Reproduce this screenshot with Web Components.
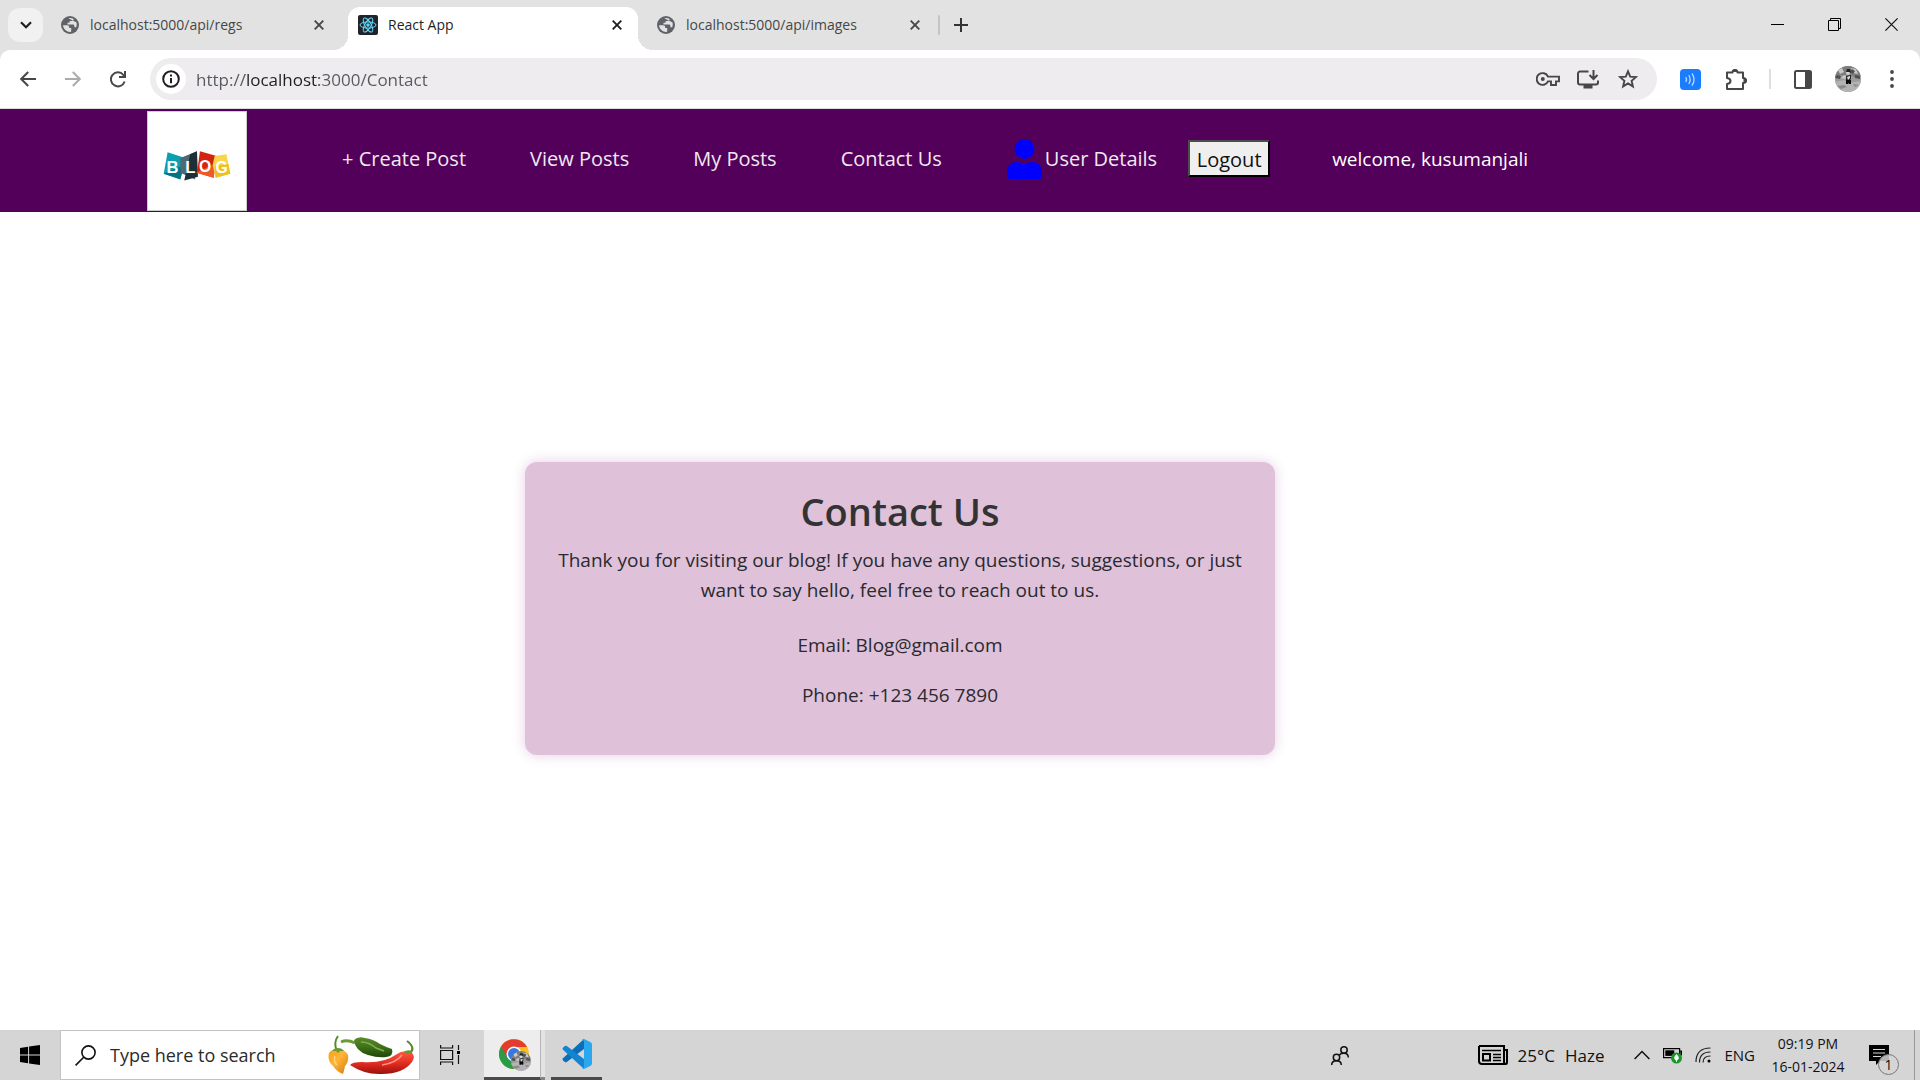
<!DOCTYPE html>
<html lang="en">
<head>
<meta charset="utf-8">
<title>React App</title>
<style>
  html, body { margin: 0; height: 100%; }
  body { font-family: "Open Sans", "Noto Sans", sans-serif; background: #fff; color: #212529; }
</style>
</head>
<body>
<desktop-screen>
  <tab-strip slot="tabs">
    <browser-tab icon="globe" label="localhost:5000/api/regs"></browser-tab>
    <browser-tab icon="react" label="React App" active></browser-tab>
    <browser-tab icon="globe" label="localhost:5000/api/images"></browser-tab>
  </tab-strip>
  <browser-toolbar slot="toolbar"></browser-toolbar>
  <blog-navbar slot="nav">
    <nav-link href="#create">+ Create Post</nav-link>
    <nav-link href="#view">View Posts</nav-link>
    <nav-link href="#mine">My Posts</nav-link>
    <nav-link href="#contact">Contact Us</nav-link>
    <nav-link href="#user" user>User Details</nav-link>
  </blog-navbar>
  <contact-card>
    <span slot="title">Contact Us</span>
    <span slot="intro">Thank you for visiting our blog! If you have any questions, suggestions, or just want to say hello, feel free to reach out to us.</span>
    <span slot="email">Email: Blog@gmail.com</span>
    <span slot="phone">Phone: +123 456 7890</span>
  </contact-card>
  <task-bar slot="taskbar"></task-bar>
</desktop-screen>

<script>
const RESET = `
  :host, *, *::before, *::after { box-sizing: border-box; }
  button { border: 0; padding: 0; margin: 0; background: none; font: inherit; color: inherit; display: grid; place-items: center; flex: none; }
  input { font: inherit; border: 0; outline: 0; padding: 0; background: none; min-width: 0; }
  svg { display: block; flex: none; }
`;
function define(name, html) {
  const template = document.createElement('template');
  customElements.define(name, class extends HTMLElement {
    connectedCallback() {
      if (this.shadowRoot) return;
      template.innerHTML = typeof html === 'function' ? html(this) : html;
      this.attachShadow({ mode: 'open' }).appendChild(template.content.cloneNode(true));
    }
  });
}

const globe = `<svg width="18" height="18" viewBox="0 0 18 18"><circle cx="9" cy="9" r="9" fill="#5f6368"/><path d="M2 9.2h4.2c1.300 0 2 .8 2 1.900v.9h2v3.800A7 7 0 0 1 2 9.200zM7.400 2.200c2-.5 3.800-.1 5.300.9-.2 1.400-1 2-2.300 2H8.600v1.700H6.500v1.700h5.400c1 0 1.500.6 1.500 1.500v1.200h1.800c.5-1.400.8-3 .3-4.600" fill="#e2e2e2"/></svg>`;
const react = `<svg width="20" height="20" viewBox="0 0 20 20"><rect width="20" height="20" rx="2" fill="#20232a"/><g fill="none" stroke="#61dafb" stroke-width="1"><ellipse cx="10" cy="10" rx="8" ry="3.100"/><ellipse cx="10" cy="10" rx="8" ry="3.100" transform="rotate(60 10 10)"/><ellipse cx="10" cy="10" rx="8" ry="3.100" transform="rotate(120 10 10)"/></g><circle cx="10" cy="10" r="1.700" fill="#61dafb"/></svg>`;
const avatar = size => `<svg width="${size}" height="${size}" viewBox="0 0 26 26"><clipPath id="a"><circle cx="13" cy="13" r="13"/></clipPath><g clip-path="url(#a)"><rect width="26" height="26" fill="#9c9c9c"/><path d="M0 0h26v10l-5 2-4-2-5 1-6-2-6 3z" fill="#7d7d7d"/><path d="M3 4l4-2 2 4-4 2zM16 2l5 1 2 5-5-1zM9 9l3 1-2 3-4-1z" fill="#c9c9c9"/><path d="M17 3l3 2-2 3-3-2zM2 9l4 1-1 3-5-1zM20 9l5 1v3l-5-1z" fill="#4f4f4f"/><path d="M0 16l9-2 4 3 13-2v11H0z" fill="#b3b3b3"/><path d="M2 20l7-1 3 2-6 2zM18 18l6 1-4 2z" fill="#8b8b8b"/><circle cx="13" cy="7" r="2" fill="#d5d5d5"/><path d="M11 6l1-3h3l1 4-2-1zM11 10l5-1v4l-2 2h-3z" fill="#242424"/><path d="M11 14h5v4h-2v-1l-1 1h-2z" fill="#090909"/><path d="M12 11l3-1v2l-2 2z" fill="#ddd"/></g></svg>`;

define('desktop-screen', `<style>${RESET}
  :host { display: flex; flex-direction: column; min-height: 100vh; }
  main { flex: 1; display: grid; place-items: center; padding: 0 120px 25px 0; }
</style>
<slot name="tabs"></slot><slot name="toolbar"></slot><slot name="nav"></slot>
<main><slot></slot></main>
<slot name="taskbar"></slot>`);

define('browser-tab', el => `<style>${RESET}
  :host { display: block; flex: 0 1 290px; height: 43px; margin-top: 7px; color: #474747; font-size: 14px; }
  .tab { position: relative; display: flex; align-items: center; gap: 10px; height: 100%; padding: 0 11px 7px 10px; }
  .label { flex: 1; white-space: nowrap; line-height: 20px; }
  .icon { display: grid; place-items: center; width: 20px; }
  button { width: 20px; height: 20px; }
  :host([active]) { color: #1f1f1f; }
  :host([active]) .tab { background: #fff; border-radius: 12px 12px 0 0; }
  :host([active]) .tab::before, :host([active]) .tab::after { content: ""; position: absolute; bottom: 0; width: 15px; height: 15px; }
  .tab::before { right: 100%; background: radial-gradient(circle at 0 0, transparent 15px, #fff 15px); }
  .tab::after { left: 100%; background: radial-gradient(circle at 100% 0, transparent 15px, #fff 15px); }
</style>
<div class="tab"><span class="icon">${el.getAttribute('icon') === 'react' ? react : globe}</span>
<span class="label">${el.getAttribute('label')}</span>
<button aria-label="Close tab"><svg width="10" height="10" viewBox="0 0 10 10" stroke="currentColor" stroke-width="1.900"><path d="M.7.7l8.600 8.600M9.300.7L.7 9.300"/></svg></button></div>`);

define('tab-strip', `<style>${RESET}
  :host { display: flex; height: 50px; background: #e2e2e2; padding-left: 8px; }
  .find { width: 35px; height: 34px; margin: 8px 7px 0 0; border-radius: 12px; background: #f1f1f1; }
  .tabs { display: flex; flex: 0 1 886px; gap: 8px; }
  .sep { width: 2px; height: 20px; margin: 15px 14px 0 2px; border-radius: 1px; background: #c4c4c4; }
  .new { width: 14px; height: 50px; }
  .win { display: flex; margin-left: auto; }
  .win button { width: 57px; height: 48px; }
</style>
<button class="find" aria-label="Search tabs"><svg width="12" height="8" viewBox="0 0 12 8" fill="none" stroke="#1f1f1f" stroke-width="2.200"><path d="M1 1.200l5 5 5-5"/></svg></button>
<div class="tabs"><slot></slot></div>
<span class="sep"></span>
<button class="new" aria-label="New tab"><svg width="14" height="14" viewBox="0 0 14 14" stroke="#333" stroke-width="2"><path d="M7 0v14M0 7h14"/></svg></button>
<div class="win">
<button aria-label="Minimize"><svg width="13" height="13"><path d="M0 6.500h13" stroke="#000"/></svg></button>
<button aria-label="Restore"><svg width="13" height="13" fill="none" stroke="#000"><path d="M.5 2.500h10v10H.5zM2.500 2.500v-2h10v10h-2"/></svg></button>
<button aria-label="Close"><svg width="13" height="13" stroke="#111" stroke-width="1.200"><path d="M.4.4l12.200 12.200M12.600.4L.4 12.600"/></svg></button>
</div>`);

define('browser-toolbar', `<style>${RESET}
  :host { display: block; background: #e2e2e2; }
  .bar { display: flex; align-items: center; height: 59px; padding: 0 17px; background: #fff; border-radius: 10px 10px 0 0; border-bottom: 1px solid #dcdcdc; color: #474747; }
  .bar > button { width: 22px; height: 40px; margin-right: 23px; }
  .omni { display: flex; flex: 1; align-items: center; height: 42px; margin: 0 23px 0 -2px; padding: 0 17px 0 6px; border-radius: 21px; background: #eeecee; gap: 16px; }
  input { flex: 1; font-size: 17px; line-height: 24px; height: 28px; color: #474747;
    background: linear-gradient(to right, #55585c 49px, #1f1f1f 49px, #1f1f1f 123px, #55585c 123px); -webkit-background-clip: text; background-clip: text; -webkit-text-fill-color: transparent; }
  .omni button { width: 24px; height: 24px; }
  .omni .info { width: 30px; height: 30px; border-radius: 50%; background: #fff; margin-right: -6px; }
  .tools { display: flex; align-items: center; }
  .ext { margin-right: 25px; }
  .sep { width: 2px; height: 20px; background: #dedede; margin: 0 23px 0 22px; }
  .profile { margin: 0 20px 0 23px; }
  .menu { width: 22px; }
</style>
<div class="bar">
<button aria-label="Back"><svg width="16" height="16" viewBox="0 0 16 16" fill="none" stroke="#474747" stroke-width="2"><path d="M16 8H1.500M8.200 1L1.200 8l7 7"/></svg></button>
<button aria-label="Forward"><svg width="16" height="16" viewBox="0 0 16 16" fill="none" stroke="#ababab" stroke-width="2"><path d="M0 8h14.500M7.800 1l7 7-7 7"/></svg></button>
<button aria-label="Reload"><svg width="16" height="17" viewBox="0 0 16 17" fill="none" stroke="#474747" stroke-width="2"><path d="M14.600 10.500A7 7 0 1 1 13.400 4l1.300 1.500M15 0v6H9"/></svg></button>
<div class="omni">
<button class="info" aria-label="View site information"><svg width="18" height="18" viewBox="0 0 18 18" fill="none" stroke="#1f1f1f" stroke-width="2"><circle cx="9" cy="9" r="7.800"/><path d="M9 8v5.300M9 4.500v2"/></svg></button>
<input type="text" aria-label="Address" value="http://localhost:3000/Contact">
<button aria-label="Passwords"><svg width="24" height="14" viewBox="0 0 24 14" fill="none" stroke="#474747" stroke-width="1.900"><path d="M12 4.600A5.900 5.900 0 1 0 12 9.400h3V13h5V9.400h3V4.600z"/><circle cx="6.800" cy="7" r="2" fill="#474747" stroke="none"/></svg></button>
<button aria-label="Install app"><svg width="22" height="19" viewBox="0 0 22 19" fill="none" stroke="#474747" stroke-width="2"><path d="M11.500 1.500H3a2 2 0 0 0-2 2v9a2 2 0 0 0 2 2h16a2 2 0 0 0 2-2v-2M16.500 0v8.500M12.500 5l4 4 4-4"/><path d="M6.500 14h9v4.500h-9z" fill="#474747" stroke="none"/></svg></button>
<button aria-label="Bookmark"><svg width="20" height="20" viewBox="0 0 20 20" fill="none" stroke="#474747" stroke-width="1.900"><path d="M10 2.300l2.200 5.300 5.700.5-4.300 3.700 1.300 5.600L10 14.400l-4.900 3 1.300-5.600L2.100 8.100l5.700-.5z"/></svg></button>
</div>
<div class="tools"><button class="ext" aria-label="Reader extension"><svg width="21" height="21" viewBox="0 0 21 21"><rect width="21" height="21" rx="4" fill="#1a7cff"/><g fill="none" stroke="#bcd8ff" stroke-width="1.300" stroke-linecap="round"><path d="M6 8.500q1 2 0 4M9 6.500q2.300 4 0 8M12.200 4.800q3.600 5.700 0 11.400"/></g></svg></button>
<button aria-label="Extensions"><svg width="21" height="21" viewBox="0 0 21 21" fill="none" stroke="#474747" stroke-width="2"><path d="M1 3.500h5.500q0-2.500 2.500-2.500t2.500 2.500H17V9q3 0 3 2.500T17 14v6H1v-5q3.500-.5 3.500-3T1 9z" stroke-linejoin="round"/><path d="M6.500 3q0-3 2.500-3t2.500 3zM17.500 9q3.500 0 3.500 2.500T17.500 14z" fill="#474747" stroke="none"/></svg></button>
<span class="sep"></span>
<button aria-label="Side panel"><svg width="18" height="19" viewBox="0 0 18 19"><rect x="1" y="1" width="16" height="17" rx="1.500" fill="none" stroke="#474747" stroke-width="2"/><path d="M11 1h6v17h-6z" fill="#474747"/></svg></button>
<button class="profile" aria-label="Profile">${avatar(26)}</button>
<button class="menu" aria-label="Menu"><svg width="4" height="18" viewBox="0 0 4 18" fill="#474747"><circle cx="2" cy="2" r="1.900"/><circle cx="2" cy="9" r="1.900"/><circle cx="2" cy="16" r="1.900"/></svg></button></div>
</div>`);

define('nav-link', el => `<style>${RESET}
  :host { display: block; }
  a { display: flex; align-items: center; gap: 2px; color: #f0eaf0; font-size: 20px; line-height: 30px; text-decoration: none; white-space: nowrap; }
</style>
<a href="${el.getAttribute('href')}">${el.hasAttribute('user') ? '<svg width="37" height="40" viewBox="0 0 37 40" fill="#00f"><circle cx="18.500" cy="10" r="10"/><path d="M1 34c0-7 4-11 10-11 5 1.500 10 1.500 15 0 6 0 10 4 10 11v3q0 3-3 3H4q-3 0-3-3z"/></svg>' : ''}<slot></slot></a>`);

define('blog-navbar', `<style>${RESET}
  :host { display: flex; align-items: center; height: 103px; padding-left: 147px; background: #52005a; color: #fff; font-size: 20px; line-height: 30px; }
  .logo { width: 100px; height: 100px; border: 1px solid #ccc; background: #fff; margin-right: 95px; }
  .menu { display: flex; align-items: center; padding-bottom: 4px; }
  nav { display: flex; align-items: center; gap: 64px; }
  button { width: 82px; height: 37px; margin: 0 62px 0 31px; padding-top: 3px; border: 2px outset #000; border-color: #4c4c4c #000 #000 #4c4c4c; background: #efefef; color: #111; }
  .welcome { font-size: 19px; }
</style>
<svg class="logo" viewBox="0 0 100 100" role="img" aria-label="Blog logo">
<path d="M20 41l18 6-5 21-17-5z" fill="#0aa0b0"/><path d="M16 63l21-9-4 15z" fill="#00758a"/>
<path d="M33 47l17-7-2 29-15-7z" fill="#4b6a75"/><path d="M50 40l1 26-14 4 6-27z" fill="#1d3038"/>
<path d="M53 40l17 5-3 22-17-5z" fill="#d22411"/><path d="M49 62l20-10-2 15z" fill="#ef5a28"/>
<path d="M68 45l12-2 4 20-15 4-3-13z" fill="#f8d549"/><path d="M68 55l14-2 2 10-15 4z" fill="#edc126"/>
<g fill="#fff" font-family="Liberation Sans" font-weight="700" font-size="17"><text x="19" y="62">B</text><text x="38" y="62">L</text><text x="52" y="61" font-size="16">O</text><text x="69" y="62" font-size="16">G</text></g></svg>
<div class="menu"><nav><slot></slot></nav>
<button>Logout</button><span class="welcome">welcome, kusumanjali</span></div>`);

define('contact-card', `<style>${RESET}
  :host { display: block; width: 750px; max-width: 100%; padding: 25px; border-radius: 12px; background: #dfc1da; box-shadow: 0 0 13px rgba(128, 0, 128, .2); text-align: center; color: #2a2a2e; font-size: 19px; line-height: 30px; }
  h2 { margin: 0 0 10px; font-size: 38px; line-height: 48px; font-weight: 600; color: #333; }
  p { margin: 0 0 25px; }
  p + p { margin: 0 0 20px; }
</style>
<h2><slot name="title"></slot></h2><p><slot name="intro"></slot></p><p><slot name="email"></slot></p><p><slot name="phone"></slot></p>`);

define('task-bar', `<style>${RESET}
  :host { display: flex; align-items: center; height: 50px; background: #d5d5d5; color: #111; }
  .start { width: 60px; height: 50px; }
  .search { display: flex; align-items: center; width: 360px; height: 50px; padding: 0 3px 0 14px; background: #fff; border: 1px solid #c3c3c3; }
  .search input { flex: 1; margin-left: 14px; font-size: 18px; height: 30px; }
  input::placeholder { color: #2b2b2b; opacity: 1; }
  .view { width: 60px; height: 50px; margin-right: 4px; }
  .app { height: 50px; border-bottom: 3px solid #4a4a4a; }
  .chrome { position: relative; width: 57px; background: #ededed; border-right: 1px solid #b5b5b5; padding-left: 4px; }
  .chrome .me { position: absolute; left: 27px; top: 21px; }
  .stack { width: 4px; height: 50px; background: #e3e3e3; border-bottom: 3px solid #848484; margin-right: 6px; }
  .code { width: 51px; }
  .tray { display: flex; align-items: center; margin-left: auto; }
  .people { margin-right: 129px; }
  .weather { display: flex; align-items: center; gap: 10px; font-size: 17px; margin-right: 30px; }
  .icons { display: flex; align-items: center; gap: 13px; font-size: 15px; margin-right: 14px; }
  .clock { display: grid; justify-items: center; font-size: 14px; line-height: 23px; width: 78px; margin-right: 22px; }
  .note { position: relative; width: 30px; height: 40px; padding-top: 10px; margin-right: 15px; }
  .note b { position: absolute; left: 9px; bottom: 0; width: 21px; height: 21px; border: 1px solid #777; border-radius: 50%; background: rgba(213,213,213,.85); font-weight: 400; font-size: 14px; line-height: 19px; text-align: center; }
  .desk { width: 6px; height: 50px; border-left: 1px solid #999; }
</style>
<button class="start" aria-label="Start"><svg width="20" height="20" viewBox="0 0 20 20"><path d="M0 2.900l8.100-1.100v7.700H0zM9.100 1.600L20 0v9.500H9.100zM0 10.500h8.100v7.700L0 17.100zM9.100 10.500H20V20L9.100 18.400z"/></svg></button>
<label class="search"><svg width="21" height="21" viewBox="0 0 21 21" fill="none" stroke="#111" stroke-width="1.600"><circle cx="13.500" cy="7.500" r="6.600"/><path d="M8.700 12.300L.6 20.400"/></svg>
<input type="text" aria-label="Search" placeholder="Type here to search">
<svg width="88" height="42" viewBox="0 0 88 42"><defs><linearGradient id="o" x2="1" y2="1"><stop stop-color="#f9a11b"/><stop offset=".45" stop-color="#ffb437"/><stop offset="1" stop-color="#d97708"/></linearGradient><linearGradient id="g" x2="0" y2="1"><stop stop-color="#5b8c2a"/><stop offset=".5" stop-color="#3e7019"/><stop offset="1" stop-color="#1f4707"/></linearGradient><linearGradient id="r" x2="0" y2="1"><stop stop-color="#ff5a43"/><stop offset=".55" stop-color="#e02a20"/><stop offset="1" stop-color="#98100c"/></linearGradient></defs>
<path d="M9 17Q5 9 10 2" fill="none" stroke="#5b8a2a" stroke-width="2"/><path d="M1 19q3-4 8-3 8-1 11 5 1 7-3 11-1 5-2 8-6-2-10-8Q-1 27 1 19z" fill="url(#o)"/><path d="M4 17q2-3 6-3 4 0 6 3l-4 0-2 2-2-2z" fill="#6d9931"/><path d="M7 22q-2 5 2 9" stroke="#ffd583" stroke-width="1.500" fill="none"/>
<path d="M13 8q6-3 14 1" fill="none" stroke="#6b9a35" stroke-width="3"/><path d="M26 6q4-4 11-2 8 1 15 6 8 4 12 5 2 7-6 8-8 1-18-2-13-4-14-15z" fill="url(#g)"/><path d="M33 8q8 0 15 6l8 3" stroke="#83ac50" stroke-width="1.500" fill="none"/>
<path d="M82 19q6-5-3-12" fill="none" stroke="#5c8a2a" stroke-width="2.200"/><path d="M69 20q5-4 14-2 5 4 1 10Q75 40 54 40q-17 1-32-9 2-3 12-3 21 2 35-8z" fill="url(#r)"/><path d="M74 21q-6 8-20 10" stroke="#ff9583" stroke-width="1.600" fill="none"/><path d="M76 18q3-3 8-1v4l-3-2-2 1z" fill="#6a9430"/></svg></label>
<button class="view" aria-label="Task view"><svg width="20" height="20" viewBox="0 0 20 20" fill="none" stroke="#111" stroke-width="1.200"><path d="M.6 5.500h12v9H.6zM.6 0v3h12V0M.6 20v-3h12v3M18.500 0v5M18.500 10v9"/><path d="M17 6h3v3h-3z" fill="#000" stroke="none"/></svg></button>
<button class="app chrome" aria-label="Google Chrome"><svg width="30" height="30" viewBox="0 0 30 30"><circle cx="15" cy="15" r="15" fill="#fbc116"/><path d="M2 7.500A15 15 0 0 0 15 30l6.500-11.300L15 15z" fill="#2a9b47"/><path d="M2 7.500l6.500 11.200L15 8h13A15 15 0 0 0 2 7.500z" fill="#e33b2e"/><circle cx="15" cy="15" r="7.500" fill="#fff"/><circle cx="15" cy="15" r="6" fill="#3578e5"/></svg><span class="me">${avatar(20)}</span></button>
<span class="stack"></span>
<button class="app code" aria-label="Visual Studio Code"><svg width="30" height="30" viewBox="0 0 30 30"><path d="M22 0L1 19.300q-1 1 0 2l1.800 1.700q1 .7 2 0L22 10z" fill="#0a6fb8"/><path d="M22 30L1 10.700q-1-1 0-2L2.800 7q1-.7 2 0L22 20z" fill="#1384cf"/><path d="M22 0l6.800 3.200Q30 4 30 5.500v19q0 1.500-1.200 2.300L22 30q-1.500 0-2-1 2 .5 2-2V3q0-2.500-2-2 .5-1 2-1z" fill="#2ba7f0"/></svg></button>
<div class="tray">
<button class="people" aria-label="People"><svg width="18" height="19" viewBox="0 0 18 19" fill="none" stroke="#111" stroke-width="1.500"><circle cx="13" cy="4" r="3.200"/><circle cx="5.500" cy="11.500" r="3.200"/><path d="M.7 19q0-4.300 4.800-4.300t4.800 4.300M8.500 9q1-1.700 4.500-1.700 4.300 0 4.300 4.300"/></svg></button>
<button class="weather"><svg width="30" height="20" viewBox="0 0 30 20" fill="none" stroke="#000" stroke-width="2"><path d="M1 1h25v16q0 2 2 2 1 0 1-2V5h-3M1 1v15q0 3 3 3h24" stroke-width="2"/><path d="M4 5.500h19M15 9.500h8M15 12.500h8M15 15.500h8" stroke-width="1.500"/><path d="M5 9h7v6.500H5z"/></svg><span>25°C</span><span>Haze</span></button>
<div class="icons"><svg width="16" height="10" viewBox="0 0 16 10" fill="none" stroke="#111" stroke-width="1.500"><path d="M.6 9L8 1.500 15.400 9"/></svg>
<svg width="19" height="18" viewBox="0 0 19 18"><path d="M.6 2.600h16v9H.6zM17 5h1.500v4H17z" fill="none" stroke="#000" stroke-width="1.200"/><path d="M2.300 4.300h9v5.600h-9z"/><circle cx="13.500" cy="12" r="5.500" fill="#159a27"/><path d="M13.500 8.500q-4 4 0 6 4-2 0-6zM13.500 12v4" fill="#fff" stroke="#fff" stroke-width=".7"/></svg>
<svg width="16" height="16" viewBox="0 0 16 16" fill="none" stroke="#222" stroke-width="1.200"><path d="M1 15Q1 1 15.500 1M4.500 15.500Q4.500 5 15.500 5M8 15.500Q8 9 15.500 9"/><circle cx="14" cy="14" r="1.500" fill="#000" stroke="none"/></svg>
<span>ENG</span></div>
<div class="clock"><span>09:19 PM</span><span>16-01-2024</span></div>
<div class="note"><svg width="20" height="20" viewBox="0 0 20 20"><path d="M0 0h20v16h-9l-4 4v-4H0z"/><path d="M4 4.500h12M4 8h12M4 11.500h8" stroke="#d5d5d5" stroke-width="1.200"/></svg><b>1</b></div>
<span class="desk"></span></div>`);
</script>
</body>
</html>
